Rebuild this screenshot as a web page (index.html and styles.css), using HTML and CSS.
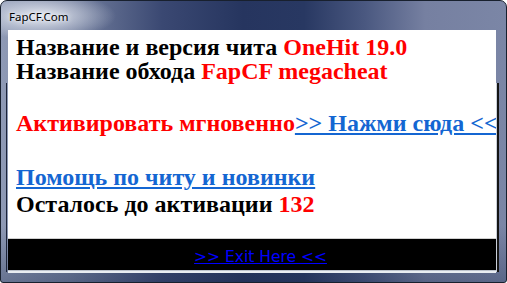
FILE: index.html
```html
<!DOCTYPE html>
<html lang="ru">
<head>
<meta charset="utf-8">
<title>FapCF.Com</title>
<link rel="stylesheet" href="styles.css">
</head>
<body>
<div class="window">
  <div class="titlebar"><span class="title">FapCF.Com</span></div>
  <div class="client">
    <div class="page">
      <div class="info">
        <div class="line">Название и версия чита <span class="red">OneHit 19.0</span></div>
        <div class="line">Название обхода <span class="red">FapCF megacheat</span></div>
      </div>
      <div class="main">
        <div class="line blank"></div>
        <div class="line"><span class="red">Активировать мгновенно</span><a href="#" class="link">&gt;&gt; Нажми сюда &lt;&lt;</a></div>
        <div class="line blank"></div>
        <div class="line"><a href="#" class="link">Помощь по читу и новинки</a></div>
        <div class="line">Осталось до активации <span class="red">132</span></div>
      </div>
    </div>
    <div class="footer"><a href="#" class="exit">&gt;&gt; Exit Here &lt;&lt;</a></div>
  </div>
</div>
</body>
</html>
```

FILE: styles.css
```css
html, body {
  margin: 0;
  padding: 0;
  background: #ffffff;
}

.window {
  position: relative;
  width: 507px;
  height: 283px;
  box-sizing: border-box;
  border: 1px solid #18202e;
  border-radius: 7px 7px 3px 3px;
  padding: 0 10px 9px 7px;
  display: flex;
  flex-direction: column;
  background:
    radial-gradient(ellipse 75px 24px at 40px 15px, rgba(232,236,244,0.95), rgba(232,236,244,0) 100%),
    linear-gradient(180deg, rgba(0,0,0,0) 0%, rgba(0,0,0,0) 80%, rgba(30,45,80,0.35) 100%),
    linear-gradient(90deg, #8f9ab5 0%, #74809f 14%, #3a4872 32%, #26355f 48%, #283862 60%, #4a5880 72%, #7680a1 84%, #7b86a6 100%);
  overflow: hidden;
}

/* resize-frame edge lines drawn over the window border */
.window::before,
.window::after {
  content: "";
  position: absolute;
  top: 82px;
  bottom: 10px;
}

.window::before {
  left: 5px;
  width: 1px;
  background: #1c2438;
}

.window::after {
  right: 7px;
  width: 2px;
  background: #141414;
  border-left: 1px solid #c9ced8;
}

.titlebar {
  height: 29px;
  flex: none;
  display: flex;
  align-items: center;
  padding-left: 1px;
}

.title {
  font-family: "Noto Sans", "DejaVu Sans", sans-serif;
  font-size: 11.5px;
  color: #000000;
  text-shadow: 0 0 6px #eef1f7, 0 0 3px #eef1f7;
  margin-top: 1px;
}

.client {
  flex: 1;
  display: flex;
  flex-direction: column;
  background: #ffffff;
  border-bottom: 1px solid #bcc2cc;
  box-shadow: 0 2px 0 #e9edf2;
  margin-bottom: 2px;
  overflow: hidden;
}

.page {
  flex: 1;
  padding: 5px 0 0 8px;
  overflow: hidden;
  white-space: nowrap;
  font-family: "Liberation Serif", "Times New Roman", serif;
  font-weight: bold;
  font-size: 24px;
  color: #000000;
  border-bottom: 1px solid #d0d0d0;
}

.info {
  line-height: 24px;
}

.main {
  line-height: 27px;
}

.blank {
  height: 27px;
}

.red {
  color: #ff0000;
}

.link {
  color: #1466d2;
  text-decoration: underline;
}

.footer {
  height: 31px;
  flex: none;
  background: #000000;
  display: flex;
  justify-content: center;
  align-items: center;
  padding-left: 17px;
  box-sizing: border-box;
}

.exit {
  font-family: "DejaVu Sans", Verdana, sans-serif;
  font-size: 15.5px;
  color: #0000ff;
  text-decoration: underline;
  margin-top: 4px;
}
```
